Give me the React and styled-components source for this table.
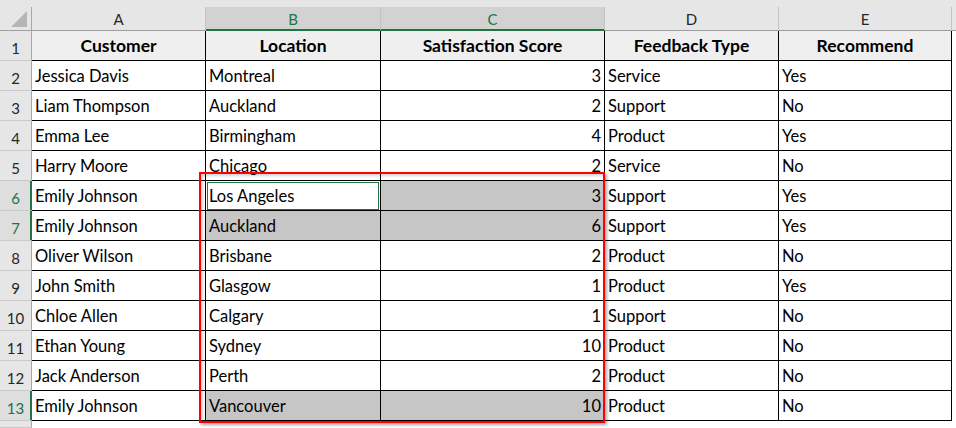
import React from 'react';
import styled, { createGlobalStyle, css } from 'styled-components';

const GlobalStyle = createGlobalStyle`
  html, body {
    margin: 0;
    padding: 0;
    background: #fff;
  }
  body {
    font-family: Lato, "Open Sans", sans-serif;
    color: #000;
  }
`;

const GREEN = '#217346';

const Sheet = styled.div`
  position: relative;
  display: grid;
  grid-template-columns: 32px 174px 175px 224px 174px 173px 1fr;
  grid-template-rows: 7px 24px repeat(13, 30px) 1fr;
  width: 956px;
  height: 428px;
  overflow: hidden;
  background: #fff;
`;

const TopStrip = styled.div`
  grid-column: 1 / -1;
  background: #e6e6e6;
`;

const Corner = styled.div`
  display: flex;
  align-items: flex-end;
  justify-content: flex-end;
  padding: 0 4px 3px 0;
  background: #e6e6e6;
  border-right: 1px solid #a8a8a8;
  border-bottom: 1px solid #9e9e9e;
  box-sizing: border-box;
`;

const CornerMark = styled.div`
  width: 16px;
  height: 16px;
  background: #b5b5b5;
  clip-path: polygon(100% 0, 100% 100%, 0 100%);
`;

const ColHeader = styled.div`
  display: flex;
  align-items: center;
  justify-content: center;
  box-sizing: border-box;
  padding-top: 1px;
  font-size: 15px;
  color: #262626;
  background: #e6e6e6;
  border-right: 1px solid #c3c3c3;
  border-bottom: 1px solid #9e9e9e;

  ${({ $selected }) => $selected && css`
    background: #d2d2d2;
    color: ${GREEN};
    border-bottom: 2px solid ${GREEN};
  `}
`;

const RowHeader = styled.div`
  display: flex;
  align-items: flex-end;
  justify-content: center;
  box-sizing: border-box;
  padding-bottom: 3px;
  font-size: 15px;
  line-height: 18px;
  color: #262626;
  background: #e6e6e6;
  border-right: 1px solid #a8a8a8;
  border-bottom: 1px solid #c9c9c9;

  ${({ $selected }) => $selected && css`
    color: ${GREEN};
    background: #dedede;
    border-right: 1px solid ${GREEN};
    box-shadow: inset -1px 0 ${GREEN};
  `}
`;

const Cell = styled.div`
  position: relative;
  display: flex;
  align-items: flex-end;
  justify-content: ${({ $align }) => ($align === 'right' ? 'flex-end' : $align === 'center' ? 'center' : 'flex-start')};
  box-sizing: border-box;
  padding: 0 3px 4px 3px;
  font-size: 16.5px;
  line-height: 20px;
  white-space: nowrap;
  border-right: 1px solid #000;
  border-bottom: 1px solid #000;
  background: ${({ $shade }) => ($shade === 'selected' ? '#c6c6c6' : '#fff')};

  ${({ $head }) => $head && css`
    background: #efefef;
    font-weight: 700;
    font-size: 17.5px;
  `}

  ${({ $shade }) => $shade === 'active' && css`
    &::after {
      content: '';
      position: absolute;
      inset: 1px 1px 0 1px;
      border: 1px solid ${GREEN};
    }
  `}
`;

const Filler = styled.div`
  background: ${({ $gray }) => ($gray ? '#e6e6e6' : '#fff')};
  border-bottom: ${({ $gray }) => ($gray ? '1px solid #9e9e9e' : 'none')};
  box-sizing: border-box;
`;

const Highlight = styled.div`
  position: absolute;
  left: 199px;
  top: 172px;
  width: 406px;
  height: 251px;
  box-sizing: border-box;
  border: 2px solid #f00;
  box-shadow: 2px 2px 3px rgba(0, 0, 0, 0.35), inset 2px 2px 3px rgba(0, 0, 0, 0.18);
  pointer-events: none;
`;

const columns = [
  { key: 'A', title: 'Customer', align: 'left' },
  { key: 'B', title: 'Location', align: 'left', selected: true },
  { key: 'C', title: 'Satisfaction Score', align: 'right', selected: true },
  { key: 'D', title: 'Feedback Type', align: 'left' },
  { key: 'E', title: 'Recommend', align: 'left' },
];

const rows = [
  ['Jessica Davis', 'Montreal', 3, 'Service', 'Yes'],
  ['Liam Thompson', 'Auckland', 2, 'Support', 'No'],
  ['Emma Lee', 'Birmingham', 4, 'Product', 'Yes'],
  ['Harry Moore', 'Chicago', 2, 'Service', 'No'],
  ['Emily Johnson', 'Los Angeles', 3, 'Support', 'Yes'],
  ['Emily Johnson', 'Auckland', 6, 'Support', 'Yes'],
  ['Oliver Wilson', 'Brisbane', 2, 'Product', 'No'],
  ['John Smith', 'Glasgow', 1, 'Product', 'Yes'],
  ['Chloe Allen', 'Calgary', 1, 'Support', 'No'],
  ['Ethan Young', 'Sydney', 10, 'Product', 'No'],
  ['Jack Anderson', 'Perth', 2, 'Product', 'No'],
  ['Emily Johnson', 'Vancouver', 10, 'Product', 'No'],
];

// sheet row numbers that are part of the selection
const selectedRows = [6, 7, 13];

const shadeFor = (rowNum, col) => {
  if (rowNum === 6 && col === 'B') return 'active';
  if (selectedRows.includes(rowNum) && (col === 'B' || col === 'C')) return 'selected';
  return null;
};

export default function App() {
  return (
    <>
      <GlobalStyle />
      <Sheet>
        <TopStrip />

        <Corner><CornerMark /></Corner>
        {columns.map(c => (
          <ColHeader key={c.key} $selected={c.selected}>{c.key}</ColHeader>
        ))}
        <Filler $gray />

        <RowHeader>1</RowHeader>
        {columns.map(c => (
          <Cell key={c.key} $head $align="center">{c.title}</Cell>
        ))}
        <Filler />

        {rows.map((r, i) => {
          const rowNum = i + 2;
          return (
            <React.Fragment key={rowNum}>
              <RowHeader $selected={selectedRows.includes(rowNum)}>{rowNum}</RowHeader>
              {columns.map((c, j) => (
                <Cell key={c.key} $align={c.align} $shade={shadeFor(rowNum, c.key)}>
                  {r[j]}
                </Cell>
              ))}
              <Filler />
            </React.Fragment>
          );
        })}

        <RowHeader />

        <Highlight />
      </Sheet>
    </>
  );
}
